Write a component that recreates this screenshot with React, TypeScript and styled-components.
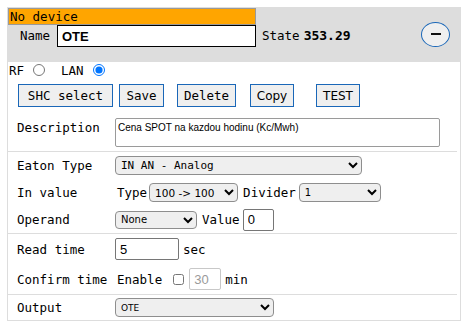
import React from "react";
import styled, { createGlobalStyle } from "styled-components";

const GlobalStyle = createGlobalStyle`
  body {
    margin: 0;
    background: #fff;
    color: #000;
    font-family: "DejaVu Sans Mono", "Liberation Mono", monospace;
    font-size: 12.5px;
  }
`;

const Card = styled.div`
  margin: 7px 0 0 7px;
  width: 454px;
  box-sizing: border-box;
  border: 1px solid #ddd;
`;

const Header = styled.div`
  display: flex;
  align-items: flex-start;
  height: 54px;
  background: #ddd;
`;

const LeftBlock = styled.div`
  width: 248px;
`;

const TitleBar = styled.div`
  height: 17px;
  box-sizing: border-box;
  border: 1px solid #999;
  background: #ffa500;
  padding-left: 1px;
  line-height: 15px;
`;

const NameRow = styled.div`
  display: flex;
  height: 22px;
`;

const NameLabel = styled.label`
  width: 49px;
  box-sizing: border-box;
  padding-left: 12px;
  line-height: 22px;
`;

const NameInput = styled.input`
  width: 199px;
  height: 22px;
  box-sizing: border-box;
  margin: 0;
  border: 1px solid #000;
  padding: 0 4px;
  background: #fff;
  font-family: "Liberation Sans", Arial, sans-serif;
  font-size: 13px;
  font-weight: bold;
  outline: none;
`;

const StateText = styled.div`
  align-self: center;
  margin-left: 6px;
  b {
    margin-left: 4px;
    font-size: 13px;
  }
`;

const CircleButton = styled.button`
  align-self: center;
  margin: 0 10px 2px auto;
  width: 29px;
  height: 25px;
  box-sizing: border-box;
  border: 1.5px solid #1a67b8;
  border-radius: 50%;
  background: #efefef;
  padding: 0;
  display: flex;
  align-items: center;
  justify-content: center;
  &::after {
    content: "";
    width: 10px;
    height: 1.5px;
    background: #111;
  }
`;

const RadioRow = styled.div`
  display: flex;
  align-items: center;
  height: 16px;
  padding-left: 1px;
`;

const Radio = styled.input.attrs({ type: "radio" })<{ $ml: number; $mr: number }>`
  width: 12px;
  height: 12px;
  margin: 0 ${(p) => p.$mr}px 0 ${(p) => p.$ml}px;
`;

const ButtonRow = styled.div`
  display: flex;
  margin-top: 6px;
  padding-left: 10px;
`;

const ActionButton = styled.button<{ $w: number; $ml: number; $sans?: boolean }>`
  width: ${(p) => p.$w}px;
  height: 23px;
  margin-left: ${(p) => p.$ml}px;
  box-sizing: border-box;
  padding: 0;
  border: 1px solid #1a67b8;
  border-radius: 0;
  background: #efefef;
  color: #000;
  font-family: ${(p) =>
    p.$sans ? '"DejaVu Sans", Verdana, sans-serif' : '"DejaVu Sans Mono", monospace'};
  font-size: ${(p) => (p.$sans ? "12px" : "12.5px")};
`;

const DescRow = styled.div`
  display: flex;
  align-items: flex-start;
  margin-top: 11px;
  padding: 0 0 4px 9px;
`;

const Label = styled.div<{ $top?: number }>`
  width: 98px;
  flex-shrink: 0;
  padding-top: ${(p) => p.$top ?? 0}px;
  line-height: 15px;
`;

const DescArea = styled.textarea`
  width: 325px;
  height: 29px;
  box-sizing: border-box;
  margin: 0;
  padding: 3px 2px;
  border: 1px solid #9a9a9a;
  border-radius: 2px;
  resize: none;
  font-family: "Liberation Sans", Arial, sans-serif;
  font-size: 10px;
  color: #000;
  outline: none;
`;

const Section = styled.div`
  margin-right: 3px;
  border-top: 1px solid #ddd;
`;

const Row = styled.div<{ $h: number }>`
  display: flex;
  align-items: center;
  height: ${(p) => p.$h}px;
  padding-left: 9px;
`;

const Text = styled.span<{ $ml?: number; $mr?: number }>`
  margin-left: ${(p) => p.$ml ?? 0}px;
  margin-right: ${(p) => p.$mr ?? 0}px;
  white-space: pre;
`;

const Select = styled.select<{ $w: number; $h?: number; $font: string; $size: number }>`
  width: ${(p) => p.$w}px;
  height: ${(p) => p.$h ?? 19}px;
  box-sizing: border-box;
  margin: 0;
  padding: 0 0 0 1px;
  border: 1px solid #8e8e8e;
  border-radius: 4px;
  background-color: #efefef;
  color: #000;
  font-family: ${(p) => p.$font};
  font-size: ${(p) => p.$size}px;
`;

const Field = styled.input<{ $w: number }>`
  width: ${(p) => p.$w}px;
  height: 22px;
  box-sizing: border-box;
  margin: 0;
  padding: 0 4px;
  border: 1px solid #767676;
  border-radius: 2px;
  background: #fff;
  color: #000;
  font-family: "Liberation Sans", Arial, sans-serif;
  font-size: 13px;
  &:disabled {
    border-color: #c8c8c8;
    color: #9a9a9a;
    background: #fff;
  }
`;

const Check = styled.input.attrs({ type: "checkbox" })`
  width: 11px;
  height: 11px;
  margin: 0 5px 0 11px;
`;

const MONO = '"DejaVu Sans Mono", monospace';
const SANS = '"DejaVu Sans", Verdana, sans-serif';

export default function App() {
  return (
    <>
      <GlobalStyle />
      <Card>
        <Header>
          <LeftBlock>
            <TitleBar>No device</TitleBar>
            <NameRow>
              <NameLabel>Name</NameLabel>
              <NameInput defaultValue="OTE" />
            </NameRow>
          </LeftBlock>
          <StateText>
            State<b>353.29</b>
          </StateText>
          <CircleButton aria-label="collapse" />
        </Header>

        <RadioRow>
          RF
          <Radio name="conn" $ml={9} $mr={16} />
          LAN
          <Radio name="conn" $ml={9} $mr={0} defaultChecked />
        </RadioRow>

        <ButtonRow>
          <ActionButton $w={95} $ml={0}>SHC select</ActionButton>
          <ActionButton $w={45} $ml={6}>Save</ActionButton>
          <ActionButton $w={59} $ml={13}>Delete</ActionButton>
          <ActionButton $w={44} $ml={14} $sans>Copy</ActionButton>
          <ActionButton $w={44} $ml={22} $sans>TEST</ActionButton>
        </ButtonRow>

        <DescRow>
          <Label $top={2}>Description</Label>
          <DescArea defaultValue="Cena SPOT na kazdou hodinu (Kc/Mwh)" />
        </DescRow>

        <Section>
          <Row $h={27}>
            <Label>Eaton Type</Label>
            <Select $w={247} $font={MONO} $size={11} defaultValue="an">
              <option value="an">IN AN - Analog</option>
            </Select>
          </Row>
          <Row $h={27}>
            <Label>In value</Label>
            <Text $ml={2} $mr={2}>Type</Text>
            <Select $w={89} $font={SANS} $size={10.5} defaultValue="100">
              <option value="100">100 -&gt; 100</option>
            </Select>
            <Text $ml={5} $mr={3}>Divider</Text>
            <Select $w={82} $font={SANS} $size={10} defaultValue="1">
              <option value="1">1</option>
            </Select>
          </Row>
          <Row $h={27}>
            <Label>Operand</Label>
            <Select $w={82} $h={18} $font={SANS} $size={10} defaultValue="none">
              <option value="none">None</option>
            </Select>
            <Text $ml={5} $mr={3}>Value</Text>
            <Field $w={31} defaultValue="0" />
          </Row>
        </Section>

        <Section>
          <Row $h={30}>
            <Label>Read time</Label>
            <Field $w={64} defaultValue="5" />
            <Text $ml={4}>sec</Text>
          </Row>
          <Row $h={30}>
            <Label>Confirm time</Label>
            <Text $ml={2}>Enable</Text>
            <Check />
            <Field $w={32} defaultValue="30" disabled />
            <Text $ml={4}>min</Text>
          </Row>
        </Section>

        <Section>
          <Row $h={25}>
            <Label>Output</Label>
            <Select $w={159} $font={SANS} $size={9} defaultValue="ote">
              <option value="ote">OTE</option>
            </Select>
          </Row>
        </Section>
      </Card>
    </>
  );
}
